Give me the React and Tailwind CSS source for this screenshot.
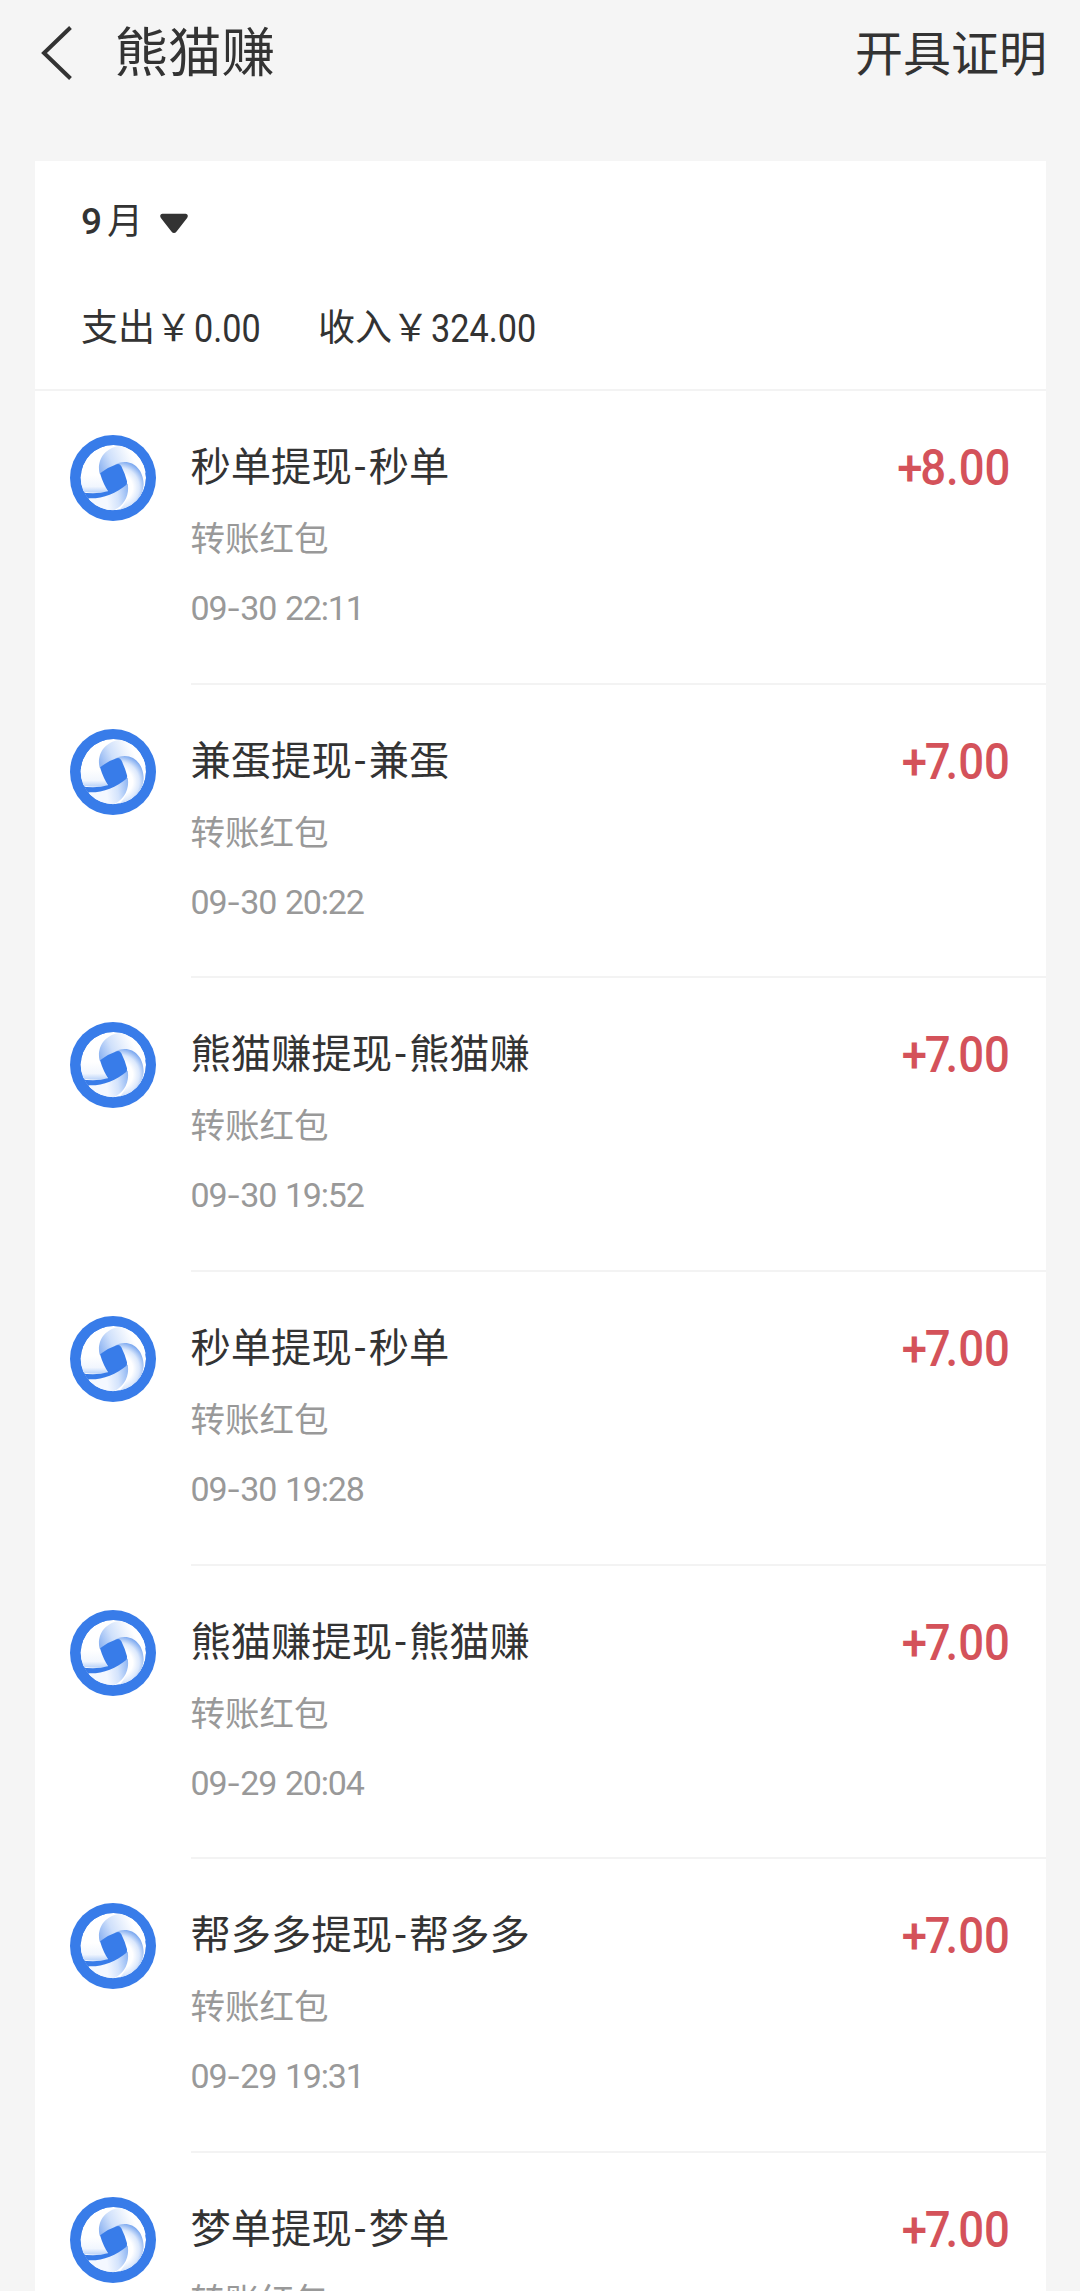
import { Fragment } from "react";

const records = [
  { title: ["秒单提现", "秒单"], date: ["09", "30 22:11"], amount: 8 },
  { title: ["兼蛋提现", "兼蛋"], date: ["09", "30 20:22"], amount: 7 },
  { title: ["熊猫赚提现", "熊猫赚"], date: ["09", "30 19:52"], amount: 7 },
  { title: ["秒单提现", "秒单"], date: ["09", "30 19:28"], amount: 7 },
  { title: ["熊猫赚提现", "熊猫赚"], date: ["09", "29 20:04"], amount: 7 },
  { title: ["帮多多提现", "帮多多"], date: ["09", "29 19:31"], amount: 7 },
  { title: ["梦单提现", "梦单"], amount: 7 },
];

export default function App() {
  return (
    <div className="flex h-[2291px] w-[1080px] flex-col overflow-hidden bg-[#f5f5f5] font-['Roboto','Noto_Sans_CJK_SC',sans-serif] text-[#333333]">
      <header className="flex h-[161px] shrink-0 items-start justify-between pl-[40px] pr-[33px]">
        <div className="flex items-start">
          <svg className="mt-[26px] h-[54px] w-[34px]" viewBox="0 0 34 54" fill="none">
            <path d="M30.5 1.5 L4 27 L30.5 52.5" stroke="#333333" strokeWidth="4" />
          </svg>
          <h1 className="ml-[40.5px] mt-[14px] text-[53.5px] leading-[80px]">熊猫赚</h1>
        </div>
        <button className="mt-[19px] text-[48px] leading-[72px]">开具证明</button>
      </header>

      <main className="mx-[35px] flex w-[1011px] grow flex-col bg-white">
        <section className="h-[228px] shrink-0 pl-[46px] pt-[35px]">
          <div className="flex h-[52px] items-center">
            <span className="w-[26px] text-[37px] font-medium leading-[52px]">9</span>
            <span className="text-[36px] leading-[52px]">月</span>
            <svg className="ml-[16px] mt-[3px] h-[21px] w-[30px]" viewBox="0 0 29 21">
              <path
                d="M3 1.500 H26 Q28.500 2 27 4.500 L16.500 18 Q14.500 20.500 12.500 18 L2 4.500 Q0.500 2 3 1.500 Z"
                fill="#333333"
                stroke="#333333"
                strokeWidth="1.500"
              />
            </svg>
          </div>
          <div className="mt-[54px] flex h-[54px] items-center">
            <Total label="支出" value="0.00" />
            <div className="w-[50px]" />
            <Total label="收入" value="324.00" />
          </div>
        </section>
        <div className="h-[2px] shrink-0 bg-[#f3f3f3]" />
        {records.map((record, idx) => (
          <Fragment key={idx}>
            <RecordRow record={record} />
          </Fragment>
        ))}
      </main>
    </div>
  );
}

function Total({ label, value }) {
  return (
    <div className="flex items-center">
      <span className="text-[37px] leading-[54px]">{label}￥</span>
      <span className="ml-[2px] origin-left scale-x-90 text-[38px] leading-[54px]">{value}</span>
    </div>
  );
}

function RecordRow({ record }) {
  return (
    <div className="flex h-[293.7px] shrink-0 items-start pl-[35px]">
      <CoinIcon />
      <div className="ml-[34.5px] flex h-full grow items-start justify-between border-b-2 border-[#f3f3f3] pr-[36px]">
        <div className="flex flex-col items-start">
          <p className="mt-[47px] flex text-[40.3px] leading-[60px]">
            <span>{record.title[0]}</span>
            <span className="w-[17px] text-center">-</span>
            <span>{record.title[1]}</span>
          </p>
          <p className="mt-[16px] text-[34.5px] leading-[50px] text-[#999999]">转账红包</p>
          {record.date && (
            <p className="mt-[20px] flex text-[34px] leading-[48px] tracking-[-1.200px] text-[#999999]">
              <span>{record.date[0]}</span>
              <span className="w-[14px] scale-x-125 text-center">-</span>
              <span className="[word-spacing:1.500px]">{record.date[1]}</span>
            </p>
          )}
        </div>
        <Amount value={record.amount} />
      </div>
    </div>
  );
}

function Amount({ value }) {
  return (
    <span className="mt-[47px] flex origin-right scale-x-[0.91] text-[50px] font-medium leading-[60px] text-[#d4525a]">
      <span className="tracking-[-2.500px]">+</span>
      <span className={value === 7 ? "tracking-[-5.500px]" : ""}>{value}</span>
      <span>.00</span>
    </span>
  );
}

function CoinIcon() {
  return (
    <svg className="mt-[44px] h-[86px] w-[86px] shrink-0" viewBox="30 30 258 258">
      <defs>
        <clipPath id="disc">
          <circle cx="160" cy="158" r="98" />
        </clipPath>
        <linearGradient id="left" x1="0" y1="150" x2="0" y2="208" gradientUnits="userSpaceOnUse">
          <stop offset="0" stopColor="#ffffff" />
          <stop offset="0.6" stopColor="#f1f6fe" />
          <stop offset="1" stopColor="#a9c8f7" />
        </linearGradient>
        <linearGradient id="top" x1="118" y1="130" x2="215" y2="85" gradientUnits="userSpaceOnUse">
          <stop offset="0" stopColor="#8fb5f2" />
          <stop offset="0.4" stopColor="#cfe0fb" />
          <stop offset="1" stopColor="#ffffff" />
        </linearGradient>
        <radialGradient id="right" cx="178" cy="188" r="80" gradientUnits="userSpaceOnUse">
          <stop offset="0.5" stopColor="#ffffff" />
          <stop offset="0.75" stopColor="#dbe8fc" />
          <stop offset="1" stopColor="#7eaaf0" />
        </radialGradient>
        <linearGradient id="bottom" x1="140" y1="222" x2="208" y2="212" gradientUnits="userSpaceOnUse">
          <stop offset="0" stopColor="#f4f8ff" />
          <stop offset="0.5" stopColor="#d3e3fc" />
          <stop offset="1" stopColor="#8fb6f3" />
        </linearGradient>
      </defs>
      <circle cx="159" cy="159" r="129" fill="#387ce9" />
      <g clipPath="url(#disc)">
        <circle cx="160" cy="158" r="98" fill="#ffffff" />
        <path d="M50 150 H124 L143 201 Q112 206 50 198 Z" fill="url(#left)" />
        <path d="M119 146 C110 112 128 68 182 62 C225 62 262 100 262 150 C235 112 200 104 119 146 Z" fill="url(#top)" />
        <path d="M160 122 C205 94 250 124 251 178 C249 215 225 250 175 258 C205 230 208 200 200 172 L182 122 Z" fill="url(#right)" />
        <path d="M84 220 C130 222 165 198 203 176 C210 212 190 248 150 260 H100 Z" fill="url(#bottom)" />
        <path d="M50 200 Q106 210 143 199 L203 176 C166 206 130 221 88 220 L62 240 Z" fill="#387ce9" />
      </g>
      <path d="M120 145 Q145 126 170 118 Q179 115 184 124 Q196 148 201 169 Q203 177 196 181 L146 202 Q130 178 120 145 Z" fill="#387ce9" />
    </svg>
  );
}
